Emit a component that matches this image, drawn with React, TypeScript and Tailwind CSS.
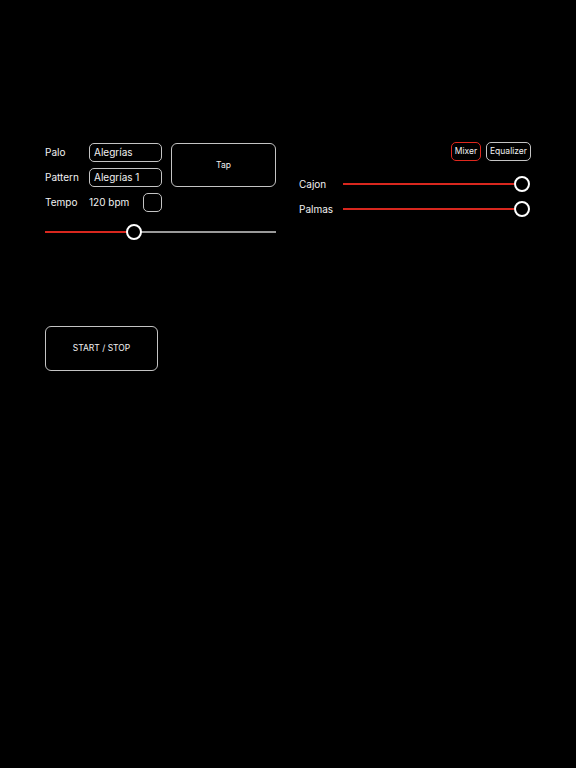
import React from "react";

function Slider({ pct, trackRight }: { pct: number; trackRight: string }) {
  return (
    <div className="relative h-4 w-full">
      <div className="absolute left-0 top-[7px] h-[2px] bg-[#d8271e]" style={{ width: `${pct}%` }} />
      <div className={`absolute right-0 top-[7px] h-[2px] ${trackRight}`} style={{ width: `${100 - pct}%` }} />
      <div
        className="absolute top-0 h-4 w-4 rounded-full border-2 border-white bg-black"
        style={{ left: `calc(${pct}% - 8px)` }}
      />
    </div>
  );
}

function MixRow({ label, className }: { label: string; className: string }) {
  return (
    <div className={`flex h-4 items-center ${className}`}>
      <span className="w-[44px] text-[10px]">{label}</span>
      <div className="relative h-4 flex-1">
        <div className="absolute left-0 right-[17px] top-[7px] h-[2px] bg-[#d8271e]" />
        <div className="absolute right-px top-0 h-4 w-4 rounded-full border-2 border-white bg-black" />
      </div>
    </div>
  );
}

export default function App() {
  return (
    <div
      className="min-h-[768px] w-[576px] bg-black text-[#f2f2f2]"
      style={{ fontFamily: "Inter, 'Noto Sans', sans-serif" }}
    >
      <div className="flex gap-[23px] px-[45px] pt-[142px]">
        {/* left */}
        <div className="mt-px flex w-[231px] flex-col">
          <div className="flex gap-[9px]">
            <div className="flex w-[117px] flex-col gap-[6px]">
              <div className="flex h-[19px] items-center">
                <span className="w-[44px] text-[10px]">Palo</span>
                <div className="flex h-[19px] w-[73px] items-center rounded-[5px] border border-[#c4c4c4] pl-[4px] text-[10px]">
                  Alegrías
                </div>
              </div>
              <div className="flex h-[19px] items-center">
                <span className="w-[44px] text-[10px]">Pattern</span>
                <div className="flex h-[19px] w-[73px] items-center rounded-[5px] border border-[#c4c4c4] pl-[4px] text-[10px]">
                  Alegrías 1
                </div>
              </div>
              <div className="flex h-[19px] items-center">
                <span className="w-[44px] text-[10px]">Tempo</span>
                <span className="flex-1 text-[10px]">120 bpm</span>
                <div className="h-[19px] w-[19px] rounded-[5px] border border-[#c4c4c4]" />
              </div>
            </div>
            <div className="flex h-[44px] w-[105px] items-center justify-center rounded-[6px] border border-[#c4c4c4] text-[8.5px]">
              Tap
            </div>
          </div>
          <div className="mt-[12px]">
            <Slider pct={38.5} trackRight="bg-[#9a9a9a]" />
          </div>
          <div className="mt-[86px] flex h-[45px] w-[113px] items-center justify-center rounded-[6px] border border-[#c4c4c4] text-[8.5px]">
            START / STOP
          </div>
        </div>
        {/* right */}
        <div className="flex w-[232px] flex-col">
          <div className="flex justify-end gap-[5px]">
            <div className="flex h-[19px] w-[30px] items-center justify-center rounded-[5px] border border-[#e0281e] text-[8.5px]">
              Mixer
            </div>
            <div className="flex h-[19px] w-[45px] items-center justify-center rounded-[5px] border border-[#c4c4c4] text-[8.5px]">
              Equalizer
            </div>
          </div>
          <MixRow label="Cajon" className="mt-[15px]" />
          <MixRow label="Palmas" className="mt-[9px]" />
        </div>
      </div>
    </div>
  );
}
